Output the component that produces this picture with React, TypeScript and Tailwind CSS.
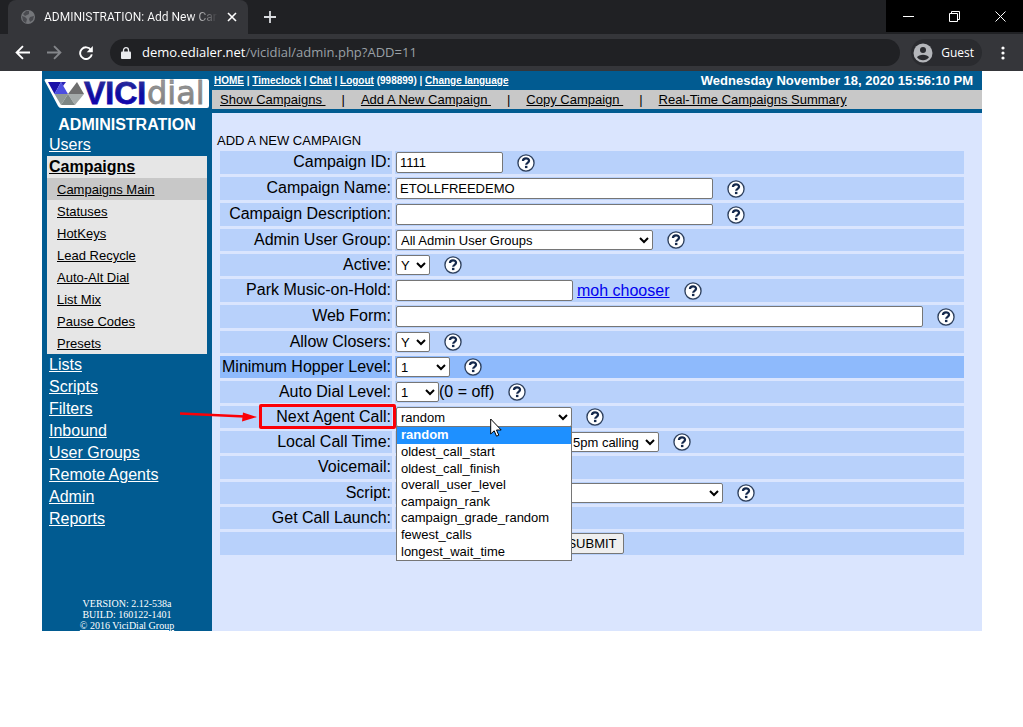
import type { ReactNode } from "react";

const SANS = "font-['Liberation_Sans',Arial,sans-serif]";
const CHROME = "font-['Open_Sans','Segoe_UI',sans-serif]";

const SUBMENU = ["Campaigns Main", "Statuses", "HotKeys", "Lead Recycle", "Auto-Alt Dial", "List Mix", "Pause Codes", "Presets"];
const SECTIONS = ["Lists", "Scripts", "Filters", "Inbound", "User Groups", "Remote Agents", "Admin", "Reports"];
const TABS = ["Show Campaigns", "Add A New Campaign", "Copy Campaign", "Real-Time Campaigns Summary"];
const AGENT_CALLS = [
  "random",
  "oldest_call_start",
  "oldest_call_finish",
  "overall_user_level",
  "campaign_rank",
  "campaign_grade_random",
  "fewest_calls",
  "longest_wait_time",
];

function BrowserBar() {
  return (
    <header className={`${CHROME} bg-[#35363a] text-white`}>
      <div className="flex h-[34px] items-stretch bg-[#202124]">
        <div className="ml-2 flex w-[240px] items-center rounded-t-lg bg-[#35363a] pl-3">
          <svg className="size-4 shrink-0" viewBox="0 0 16 16">
            <circle cx="8" cy="8" r="7" fill="#74767a" />
            <path d="M2 7l3 1 2 2-1 4-3-2zM6 2l3 0 0 3-2 1-2 1-2-2zM10 8l4-1-1 4-3 2-1-3z" fill="#4a4b50" />
          </svg>
          <span className="ml-2 w-[174px] bg-gradient-to-r from-white from-85% to-[#35363a] bg-clip-text font-[Roboto] text-xs whitespace-nowrap text-transparent">
            ADMINISTRATION: Add New Car
          </span>
          <button type="button" aria-label="Close tab" className="ml-[9px]">
            <svg className="size-[10px]" viewBox="0 0 10 10" stroke="#fff" strokeWidth="1.6">
              <path d="M1 1l8 8M9 1l-8 8" />
            </svg>
          </button>
        </div>
        <button type="button" aria-label="New tab" className="ml-4">
          <svg className="size-3" viewBox="0 0 12 12" stroke="#dadce0" strokeWidth="1.8">
            <path d="M6 0v12M0 6h12" />
          </svg>
        </button>
        <div className="ml-auto flex h-8 w-[137px] items-center justify-around bg-black">
          <button type="button" aria-label="Minimize">
            <svg className="size-[11px]" viewBox="0 0 11 11" stroke="#fff">
              <path d="M0 5.5h11" />
            </svg>
          </button>
          <button type="button" aria-label="Restore">
            <svg className="size-[11px]" viewBox="0 0 11 11" fill="none" stroke="#fff">
              <path d="M.5 2.5h8v8h-8zM2.500 2.500v-2h8v8h-2" />
            </svg>
          </button>
          <button type="button" aria-label="Close">
            <svg className="size-[11px]" viewBox="0 0 11 11" stroke="#fff">
              <path d="M.5.5l10 10M10.500.5l-10 10" />
            </svg>
          </button>
        </div>
      </div>
      <div className="flex h-[37px] items-center pr-[18px] pl-[15px]">
        <button type="button" aria-label="Back">
          <svg className="size-[15px]" viewBox="0 0 16 16" fill="none" stroke="#fff" strokeWidth="2">
            <path d="M16 8H2M8.500 1.200L1.700 8l6.800 6.800" />
          </svg>
        </button>
        <button type="button" aria-label="Forward" className="ml-[17px]">
          <svg className="size-[15px]" viewBox="0 0 16 16" fill="none" stroke="#84868a" strokeWidth="2">
            <path d="M0 8h14M7.500 1.200L14.300 8l-6.800 6.800" />
          </svg>
        </button>
        <button type="button" aria-label="Reload" className="ml-[17px]">
          <svg className="size-[14px]" viewBox="0 0 16 16" fill="none" stroke="#fff" strokeWidth="2.200">
            <path d="M13.600 4.500A6.700 6.700 0 1 0 14.600 9.500" />
            <path d="M15.800 0v7H8.800z" fill="#fff" stroke="none" />
          </svg>
        </button>
        <div className="ml-[17px] flex h-[27px] flex-1 items-center rounded-full bg-[#202124] pl-[11px]">
          <svg className="h-3 w-[10px]" viewBox="0 0 10 12">
            <rect y="4.500" width="10" height="7.500" rx="1" fill="#e8eaed" />
            <path d="M2.500 5V3.200a2.500 2.500 0 0 1 5 0V5" fill="none" stroke="#e8eaed" strokeWidth="1.300" />
          </svg>
          <span className="ml-[11px] text-[13px] text-[#9aa0a6]">
            <span className="text-white">demo.edialer.net</span>/vicidial/admin.php?ADD=11
          </span>
        </div>
        <button type="button" className="ml-[11px] flex h-[27px] items-center gap-2 rounded-full bg-[#2a2b2f] pr-2 pl-[2px] text-xs">
          <svg className="size-5" viewBox="0 0 20 20">
            <circle cx="10" cy="10" r="9.500" fill="#b4b6ba" />
            <circle cx="10" cy="7" r="3" fill="#2a2b2f" />
            <path d="M4 14.200c1.600-3.400 10.400-3.400 12 0-2.600 4-9.400 4-12 0z" fill="#2a2b2f" />
          </svg>
          Guest
        </button>
        <button type="button" aria-label="Menu" className="ml-[19px]">
          <svg className="h-[14px] w-1" viewBox="0 0 4 14" fill="#fff">
            <circle cx="2" cy="2" r="1.600" />
            <circle cx="2" cy="7" r="1.600" />
            <circle cx="2" cy="12" r="1.600" />
          </svg>
        </button>
      </div>
    </header>
  );
}

function Logo() {
  return (
    <svg className="ml-[2px] h-[30px] w-[166px] overflow-visible" viewBox="0 0 166 30" role="img" aria-label="VICIdial">
      <defs>
        <linearGradient id="vici" x1="0" y1="0" x2="0" y2="1">
          <stop offset="0" stopColor="#3a3a9c" />
          <stop offset="0.500" stopColor="#0d0d9e" />
          <stop offset="1" stopColor="#1600b8" />
        </linearGradient>
        <linearGradient id="dial" x1="0" y1="0" x2="0" y2="1">
          <stop offset="0" stopColor="#a0a0a0" />
          <stop offset="1" stopColor="#777" />
        </linearGradient>
      </defs>
      <path d="M2 0H163q2 0 2 2V27q0 2-2 2H17q-2 0-3-2L.8 2Q0 0 2 0z" fill="#fff" />
      <path d="M4 3h13l-6.500 12z" fill="#1a10a8" />
      <path d="M17 3l7 12H10.500z" fill="#4c4ee0" />
      <path d="M17 3h5l-3 4z" fill="#2c24b8" />
      <path d="M10.500 15H24l-7 11z" fill="#8f9896" />
      <path d="M33 3l7 12H24z" fill="#6e6e6e" />
      <path d="M24 15h16l-9 11z" fill="#a5abaa" />
      <path d="M24 15l7 11H17z" fill="#7d8684" />
      <text x="40" y="25" fontFamily="Liberation Sans" fontWeight="700" fontSize="32" fill="url(#vici)" stroke="url(#vici)" strokeWidth="0.800">VICI</text>
      <text x="103" y="25" fontFamily="DejaVu Sans" fontSize="32" fill="url(#dial)" stroke="#8a8a8a" strokeWidth="0.800">dial</text>
    </svg>
  );
}

function Sidebar() {
  return (
    <aside className="flex w-[170px] shrink-0 flex-col bg-[#015b91] pt-2 text-base leading-[22px] text-white">
      <Logo />
      <h1 className="mt-[5px] text-center font-bold">ADMINISTRATION</h1>
      <nav className="px-[5px]">
        <a href="#users" className="block pb-[2px] pl-[2px] leading-[18px] underline">Users</a>
        <div className="bg-[#e6e6e6] text-black">
          <a href="#campaigns" className="block pl-[2px] font-bold underline">Campaigns</a>
          <ul className="text-[13px] leading-[21px]">
            {SUBMENU.map((item, i) => (
              <li key={item} className={i === 0 ? "bg-[#c8c8c8] pt-px pl-[10px]" : "pt-px pl-[10px]"}>
                <a href="#sub" className="underline">{item}</a>
              </li>
            ))}
          </ul>
        </div>
        <ul className="pl-[2px]">
          {SECTIONS.map((item) => (
            <li key={item}>
              <a href="#section" className="underline">{item}</a>
            </li>
          ))}
        </ul>
      </nav>
      <footer className="mt-[68px] text-center font-['Liberation_Serif','Times_New_Roman',serif] text-[10px] leading-[11px]">
        VERSION: 2.12-538a
        <br />
        BUILD: 160122-1401
        <br />
        <a href="#about" className="underline">© 2016 ViciDial Group</a>
      </footer>
    </aside>
  );
}

function Help() {
  return (
    <button type="button" aria-label="Help" className="ml-[14px] shrink-0">
      <svg className="size-[18px]" viewBox="0 0 19 19">
        <circle cx="9.500" cy="9.500" r="8.500" fill="#fff" stroke="#2d3f5c" strokeWidth="1.400" />
        <path d="M6.300 7.400C6.300 3.600 12.700 3.700 12.700 7.200 12.700 9.300 9.700 9.300 9.700 11.400" fill="none" stroke="#14284b" strokeWidth="2.400" />
        <rect x="8.400" y="12.500" width="2.600" height="2.400" fill="#14284b" />
      </svg>
    </button>
  );
}

type RowProps = { id: string; label: string; strong?: boolean; marker?: ReactNode; children: ReactNode };

function Row({ id, label, strong, marker, children }: RowProps) {
  const tone = strong ? "bg-[#8ebafc]" : "bg-[#b8d1fb]";
  return (
    <div className="flex gap-[3px]">
      <div className={`${tone} relative w-[172px] shrink-0 pr-px text-right`}>
        <label htmlFor={id} className="block leading-[22px] whitespace-nowrap">{label}:</label>
        {marker}
      </div>
      <div className={`${tone} relative flex min-w-0 flex-1 items-center py-px pl-px`}>{children}</div>
    </div>
  );
}

function Text({ id, width, value = "" }: { id: string; width: string; value?: string }) {
  return <input id={id} type="text" defaultValue={value} className={`${width} h-[21px] rounded-xs border border-[#767676] bg-white px-[3px] text-[13px]`} />;
}

function Select({ id, width, value = "" }: { id: string; width: string; value?: string }) {
  return (
    <select id={id} className={`${width} h-5 rounded-xs border border-[#767676] bg-white text-[13px] leading-[18px]`}>
      <option>{value}</option>
    </select>
  );
}

function CallMarker() {
  return (
    <>
      <span className="absolute -top-[2px] -right-1 -bottom-px left-[39px] z-20 rounded-xs border-3 border-[#fb0007]" />
      <svg className="absolute top-[3px] -left-10 z-20 h-4 w-[78px]" viewBox="0 0 78 16">
        <path d="M0 4.500L65 7.500" stroke="#fb0007" strokeWidth="2.500" />
        <path d="M63 3.500L77 8 62 12.500z" fill="#fb0007" />
      </svg>
    </>
  );
}

function AgentCallMenu() {
  return (
    <>
      <ul className="absolute top-5 left-px z-10 grid h-[135px] w-[176px] grid-rows-8 items-center border border-[#767676] bg-white text-[13px] leading-4" role="listbox">
        {AGENT_CALLS.map((name, i) => (
          <li key={name} role="option" aria-selected={i === 0} className={i === 0 ? "h-full bg-[#1e90ff] pl-1 font-bold text-white" : "pl-1"}>
            {name}
          </li>
        ))}
      </ul>
      <svg className="absolute top-3 left-[95px] z-20 h-5 w-3" viewBox="0 0 12 20">
        <path d="M.7 1v15l3.500-3.200 2.300 5.400 2.300-1-2.300-5.200h4.700z" fill="#fff" stroke="#000" />
      </svg>
    </>
  );
}

function CampaignForm() {
  return (
    <form className="mr-[18px] ml-2 flex flex-col gap-[3px]">
      <Row id="cid" label="Campaign ID"><Text id="cid" width="w-[107px]" value="1111" /><Help /></Row>
      <Row id="name" label="Campaign Name"><Text id="name" width="w-[317px]" value="ETOLLFREEDEMO" /><Help /></Row>
      <Row id="desc" label="Campaign Description"><Text id="desc" width="w-[317px]" /><Help /></Row>
      <Row id="group" label="Admin User Group"><Select id="group" width="w-[257px]" value="All Admin User Groups" /><Help /></Row>
      <Row id="active" label="Active"><Select id="active" width="w-[34px]" value="Y" /><Help /></Row>
      <Row id="moh" label="Park Music-on-Hold">
        <Text id="moh" width="w-[177px]" />
        <a href="#moh" className="ml-1 leading-5 text-[#0000ee] underline">moh chooser</a>
        <Help />
      </Row>
      <Row id="web" label="Web Form"><Text id="web" width="w-[527px]" /><Help /></Row>
      <Row id="closers" label="Allow Closers"><Select id="closers" width="w-[34px]" value="Y" /><Help /></Row>
      <Row id="hopper" label="Minimum Hopper Level" strong><Select id="hopper" width="w-[54px]" value="1" /><Help /></Row>
      <Row id="dial" label="Auto Dial Level">
        <Select id="dial" width="w-[43px]" value="1" />
        <span className="leading-5">(0 = off)</span>
        <Help />
      </Row>
      <Row id="agent" label="Next Agent Call" marker={<CallMarker />}>
        <Select id="agent" width="w-[176px]" value="random" />
        <Help />
        <AgentCallMenu />
      </Row>
      <Row id="time" label="Local Call Time"><Select id="time" width="w-[263px]" value="12pm_5pm - Default 12pm to 5pm calling" /><Help /></Row>
      <Row id="voicemail" label="Voicemail"><Text id="voicemail" width="w-[107px]" /></Row>
      <Row id="script" label="Script"><Select id="script" width="w-[327px]" /><Help /></Row>
      <Row id="launch" label="Get Call Launch"><Select id="launch" width="w-[107px]" /></Row>
      <div className="flex justify-center bg-[#b8d1fb] py-px">
        <button type="button" className="h-[21px] w-16 rounded-xs border border-[#767676] bg-[#efefef] text-[13px] leading-4">SUBMIT</button>
      </div>
    </form>
  );
}

export default function App() {
  return (
    <div className="min-h-screen bg-white">
      <BrowserBar />
      <div className={`${SANS} mr-[41px] ml-[42px] flex text-base text-black`}>
        <Sidebar />
        <main className="min-w-0 flex-1 bg-[#dae5fe] pb-[76px]">
          <div className="flex h-[19px] items-center justify-between bg-[#015b91] pr-[9px] pl-[2px] font-bold whitespace-nowrap text-white">
            <p className="text-[10px]">
              <a href="#home" className="underline">HOME</a> | <a href="#clock" className="underline">Timeclock</a> |{" "}
              <a href="#chat" className="underline">Chat</a> | <a href="#logout" className="underline">Logout</a> (998899) |{" "}
              <a href="#language" className="underline">Change language</a>
            </p>
            <p className="text-[13px]">Wednesday November 18, 2020 15:56:10 PM</p>
          </div>
          <nav className="flex h-[23px] gap-4 border-b-4 border-[#015b91] bg-[#c8c8c8] pl-2 text-[13px] leading-[19px] whitespace-pre">
            {TABS.map((tab, i) => (
              <span key={tab} className="flex gap-4">
                {i > 0 && <span>|</span>}
                <a href="#tab" className="underline">{i < 3 ? `${tab} ` : tab}</a>
              </span>
            ))}
          </nav>
          <h2 className="mt-[18px] pl-[5px] text-[13px] leading-5">ADD A NEW CAMPAIGN</h2>
          <CampaignForm />
        </main>
      </div>
    </div>
  );
}
